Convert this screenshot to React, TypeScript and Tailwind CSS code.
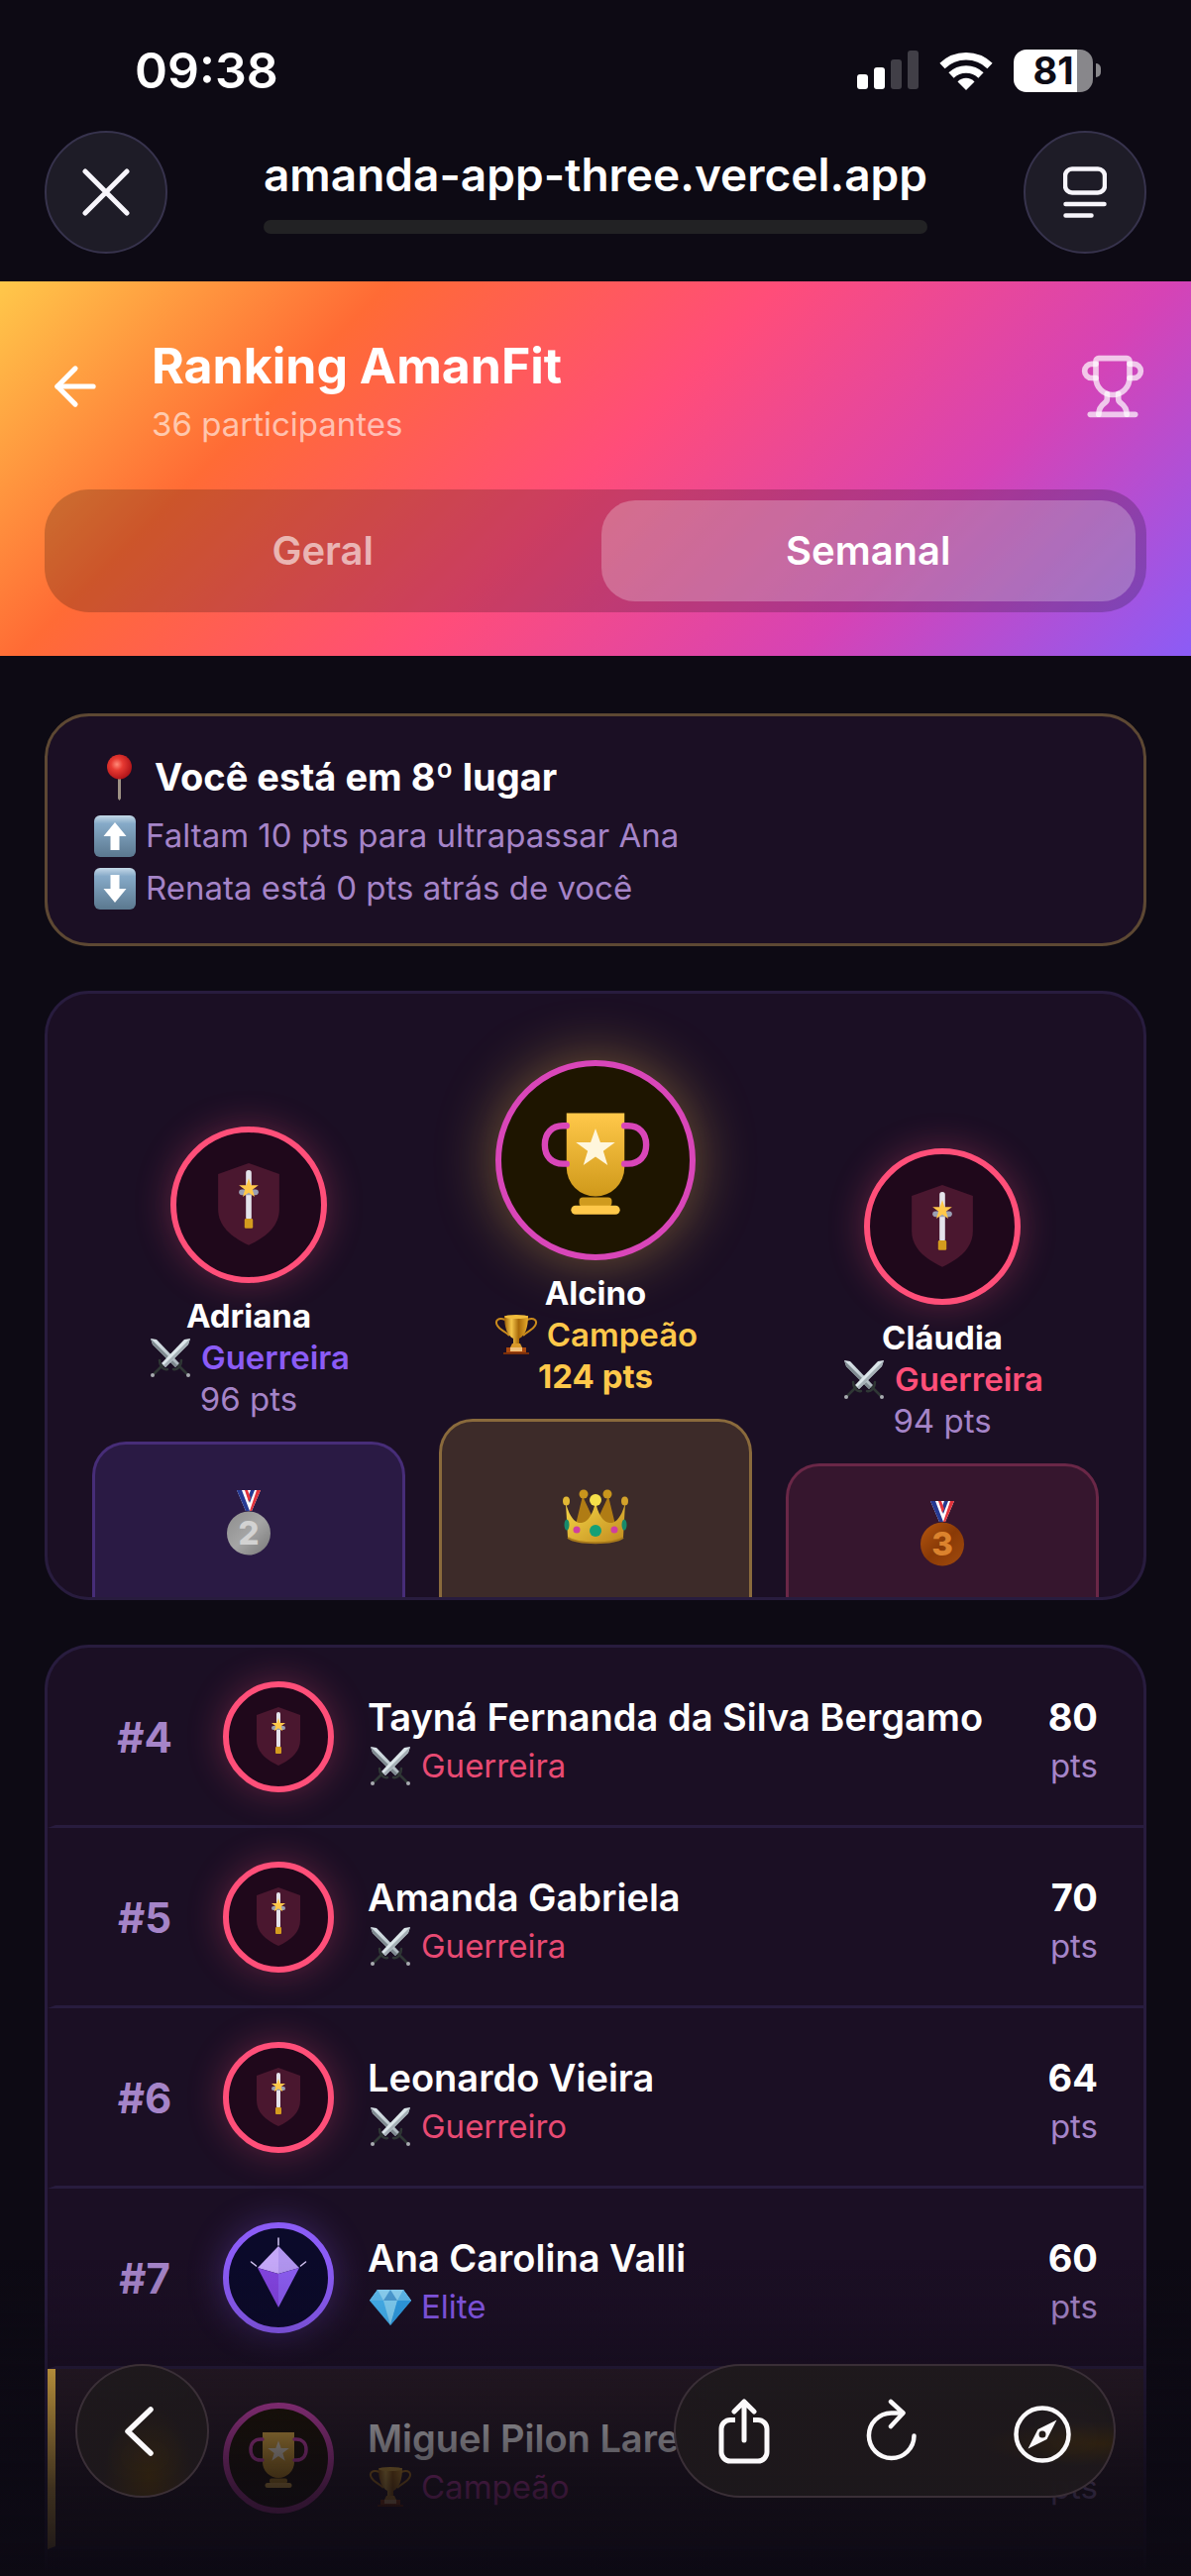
import * as React from "react"
import { ArrowLeft, Trophy } from "lucide-react"
import { clsx } from "clsx"

type Rank = "warrior" | "elite" | "champion"

interface RankingItem {
  position: number
  name: string
  rank: Rank
  title: string
  points: number
  current?: boolean
}

const ranking: RankingItem[] = [
  { position: 4, name: "Tayná Fernanda da Silva Bergamo", rank: "warrior", title: "Guerreira", points: 80 },
  { position: 5, name: "Amanda Gabriela", rank: "warrior", title: "Guerreira", points: 70 },
  { position: 6, name: "Leonardo Vieira", rank: "warrior", title: "Guerreiro", points: 64 },
  { position: 7, name: "Ana Carolina Valli", rank: "elite", title: "Elite", points: 60 },
  { position: 8, name: "Miguel Pilon Lare", rank: "champion", title: "Campeão", points: 50, current: true },
]

const rankText: Record<Rank, string> = {
  warrior: "text-[#e84a73]",
  elite: "text-[#8558e8]",
  champion: "text-[#d946b9]",
}

/* ---------- emoji ---------- */

function SwordsEmoji() {
  return (
    <svg viewBox="0 0 46 40" className="h-10 w-[46px] shrink-0" aria-hidden="true">
      <defs>
        <linearGradient id="blade" x1="0" y1="0" x2="1" y2="1">
          <stop offset="0" stopColor="#dfe9ee" />
          <stop offset="1" stopColor="#a9b4ba" />
        </linearGradient>
      </defs>
      <g stroke="#2f3735" strokeLinecap="round">
        <path d="M31 28l9 9M15 28l-9 9" strokeWidth="2.5" />
        <path d="M26 32c4 1 8-3 8-9M20 32c-4 1-8-3-8-9" strokeWidth="2.5" fill="none" />
      </g>
      <path d="M3 1l6 1 23 24-4 4L5 7z" fill="url(#blade)" />
      <path d="M3 1l27 27-2 2L5 7z" fill="#7f8a90" />
      <path d="M43 1l-6 1-23 24 4 4L41 7z" fill="#dce6ea" />
      <path d="M43 1L16 28l2 2L41 7z" fill="#a5b0b6" />
      <circle cx="5" cy="38" r="2" fill="#a8abb0" />
      <circle cx="41" cy="38" r="2" fill="#a8abb0" />
    </svg>
  )
}

function TrophyEmoji() {
  return (
    <svg viewBox="0 0 46 40" className="h-10 w-[46px] shrink-0" aria-hidden="true">
      <defs>
        <linearGradient id="cup-emoji" x1="0" y1="0" x2="1" y2="0">
          <stop offset="0" stopColor="#9c5f08" />
          <stop offset=".3" stopColor="#f5c64a" />
          <stop offset=".6" stopColor="#a86a0a" />
          <stop offset="1" stopColor="#e8ac2c" />
        </linearGradient>
      </defs>
      <path
        d="M12 5C5 2 1 6 4 11c2 4 7 5 12 10M34 5c7-3 11 1 8 6-2 4-7 5-12 10"
        fill="none"
        stroke="#c98a1c"
        strokeWidth="2"
      />
      <path d="M11 1h24c0 12-3 20-9 23v6h-6v-6C14 21 11 13 11 1z" fill="url(#cup-emoji)" />
      <ellipse cx="23" cy="2" rx="12" ry="2" fill="#f0bb3c" />
      <path d="M19 29h8l2 4H17z" fill="#d9992a" />
      <path d="M13 33h20v5H13z" fill="#a8480f" />
      <path d="M17 33h12v4H17z" fill="#f1c07a" />
      <path d="M10 38h26v2H10z" fill="#7a2f0a" />
    </svg>
  )
}

function DiamondEmoji() {
  return (
    <svg viewBox="0 0 46 40" className="h-10 w-[46px] shrink-0" aria-hidden="true">
      <path d="M10 3h26l8 11-21 25L2 14z" fill="#45b4f2" />
      <path d="M10 3h26l8 11H2z" fill="#8ed6f8" />
      <path d="M10 3l6 11H2zM36 3l-6 11h14z" fill="#5fbdf0" />
      <path d="M16 14L23 3l7 11z" fill="#4d9fd8" />
      <path d="M16 14h14l-7 25z" fill="#82d3f9" />
      <path d="M30 14h14L23 39z" fill="#2f9fe6" />
    </svg>
  )
}

function PinEmoji() {
  return (
    <svg viewBox="0 0 54 50" className="h-[50px] w-[54px] shrink-0" aria-hidden="true">
      <defs>
        <radialGradient id="pin" cx=".4" cy=".4" r=".6">
          <stop offset="0" stopColor="#ff8a78" />
          <stop offset=".4" stopColor="#e83a32" />
          <stop offset="1" stopColor="#b3161a" />
        </radialGradient>
      </defs>
      <path d="M26 24h3v22l-1.500 2L26 46z" fill="#9d9184" />
      <circle cx="27.500" cy="14" r="12.500" fill="url(#pin)" />
    </svg>
  )
}

function ArrowEmoji({ down }: { down?: boolean }) {
  return (
    <svg viewBox="0 0 46 46" className="h-[46px] w-[46px] shrink-0" aria-hidden="true">
      <defs>
        <linearGradient id="key" x1="0" y1="0" x2="0" y2="1">
          <stop offset="0" stopColor="#c5d9e8" />
          <stop offset=".2" stopColor="#86aac8" />
          <stop offset="1" stopColor="#5b788f" />
        </linearGradient>
      </defs>
      <rect x="2" y="2" width="42" height="42" rx="6" fill="url(#key)" />
      <path
        d={down ? "M18.500 9h9v14h7L23 37 11.500 23h7z" : "M18.500 37h9V23h7L23 9 11.500 23h7z"}
        fill="#fff"
      />
    </svg>
  )
}

function MedalEmoji({ place }: { place: 2 | 3 }) {
  const silver = place === 2
  return (
    <svg viewBox="0 0 44 66" className="h-[66px] w-11" aria-label={`${place}º lugar`} role="img">
      <defs>
        <linearGradient id={`medal-${place}`} x1="0" y1="0" x2="1" y2="1">
          <stop offset="0" stopColor={silver ? "#8d8d8d" : "#b5560f"} />
          <stop offset=".5" stopColor={silver ? "#a5a5a5" : "#8a3a06"} />
          <stop offset="1" stopColor={silver ? "#777" : "#a14b0d"} />
        </linearGradient>
      </defs>
      <path d="M10 0h24l-9 21h-6z" fill="#fff" />
      <path d="M10 0h5l8 21h-4zM24 0h4l-5 13-2-5z" fill="#263a93" />
      <path d="M18 0h3l3 8-2 4zM30 0h4l-9 21h-2z" fill="#e2333c" />
      <circle cx="22" cy="43.500" r="22" fill={`url(#medal-${place})`} />
      <text
        x="22"
        y="55"
        textAnchor="middle"
        fill={silver ? "#d2d2d2" : "#dc832d"}
        className="font-['Inter'] text-[33px] font-extrabold"
      >
        {place}
      </text>
    </svg>
  )
}

function CrownEmoji() {
  return (
    <svg viewBox="0 0 66 66" className="h-[66px] w-[66px]" aria-label="1º lugar" role="img">
      <defs>
        <linearGradient id="crown" x1="0" y1="0" x2="1" y2="1">
          <stop offset="0" stopColor="#f8d948" />
          <stop offset="1" stopColor="#c08a1e" />
        </linearGradient>
      </defs>
      <path d="M12 46l8-33 13 28 13-28 8 33z" fill="#b07c14" />
      <circle cx="21" cy="11" r="4.500" fill="#c9951c" />
      <circle cx="45" cy="11" r="4.500" fill="#c9951c" />
      <path d="M3 20c4 15 10 21 16 20 7-1 12-10 14-22 2 12 7 21 14 22 6 1 12-5 16-20l-2 35c-10 7-46 7-56 0z" fill="url(#crown)" />
      <circle cx="33" cy="17" r="6" fill="#f6e04a" />
      <ellipse cx="3.500" cy="18" rx="3.500" ry="4.500" fill="#e2b834" />
      <ellipse cx="62.500" cy="18" rx="3.500" ry="4.500" fill="#d3a22a" />
      <path d="M5 55c10 7 46 7 56 0" fill="none" stroke="#a87a1c" strokeWidth="2" />
      <circle cx="33" cy="48" r="6" fill="#14a076" />
      <circle cx="14" cy="47" r="3.500" fill="#cf3fa0" />
      <circle cx="52" cy="47" r="3.500" fill="#cf3fa0" />
      <ellipse cx="4" cy="42" rx="2.500" ry="5.500" fill="#178a6a" />
      <ellipse cx="62" cy="42" rx="2.500" ry="5.500" fill="#178a6a" />
    </svg>
  )
}

function RankEmoji({ rank }: { rank: Rank }) {
  if (rank === "elite") return <DiamondEmoji />
  if (rank === "champion") return <TrophyEmoji />
  return <SwordsEmoji />
}

/* ---------- avatars ---------- */

function WarriorArt() {
  return (
    <>
      <path d="M56 26l22 8v25c0 12-9 20-22 26-13-6-22-14-22-26V34z" fill="#4a172f" />
      <rect x="54" y="31" width="4" height="36" rx="2" fill="#e4e3ea" />
      <rect x="49" y="45" width="14" height="4" rx="2" fill="#9aa0b4" />
      <rect x="53" y="66" width="6" height="7" rx="1" fill="#d49c1e" />
      <path d="M56 37l1.700 5h5.300l-4.300 3.200 1.600 5.100L56 47.200l-4.300 3.100 1.600-5.100L49 42h5.300z" fill="#ffc84a" />
    </>
  )
}

function EliteArt() {
  return (
    <>
      <path d="M56 24L35 46l21 6z" fill="#c5a8f8" />
      <path d="M56 24l21 22-21 6z" fill="#b195ef" />
      <path d="M35 46l21 6v34z" fill="#8344e0" />
      <path d="M77 46l-21 6v34z" fill="#8b5cf0" />
      <path d="M56 16v7M28.500 40l5 4M83.500 40l-5 4" stroke="#d5c6f5" strokeWidth="1.500" strokeLinecap="round" />
    </>
  )
}

function ChampionArt() {
  return (
    <>
      <defs>
        <linearGradient id="cup" x1="0" y1="0" x2="0" y2="1">
          <stop offset="0" stopColor="#ffc84a" />
          <stop offset="1" stopColor="#cf991a" />
        </linearGradient>
      </defs>
      <path d="M40 30h32v30a16 16 0 0 1-32 0z" fill="url(#cup)" />
      <path
        d="M40 37h-2c-6 0-10 4-10 10.500S32 58 38 58h2M72 37h2c6 0 10 4 10 10.500S80 58 74 58h-2"
        fill="none"
        stroke="#d946b9"
        strokeWidth="3.500"
        strokeLinecap="round"
      />
      <rect x="47" y="76.500" width="18" height="5" rx="2" fill="#d09b1e" />
      <rect x="42.500" y="81" width="27" height="5" rx="2.500" fill="#ffc84a" />
      <path d="M56 38.500l2.700 7.600h8.100l-6.500 4.900 2.400 7.800L56 54.100l-6.700 4.700 2.400-7.800-6.500-4.900h8.100z" fill="#fff6dc" />
    </>
  )
}

const avatarStyle: Record<Rank, string> = {
  warrior: "border-[#ff4f79] bg-[#1f081b] shadow-[0_0_36px_rgba(255,79,121,0.3)]",
  elite: "border-[#8b5cf6] bg-[#0b0a2a] shadow-[0_0_36px_rgba(139,92,246,0.3)]",
  champion: "border-[#d946b9] bg-[#1e1500]",
}

function Avatar({ rank, large, className }: { rank: Rank; large?: boolean; className?: string }) {
  return (
    <div className={clsx("shrink-0 rounded-full border-[6px]", avatarStyle[rank], className)}>
      <svg viewBox={large ? "4 4 104 104" : "6 6 100 100"} className="h-full w-full" aria-hidden="true">
        {rank === "warrior" && <WarriorArt />}
        {rank === "elite" && <EliteArt />}
        {rank === "champion" && <ChampionArt />}
      </svg>
    </div>
  )
}

/* ---------- browser chrome ---------- */

function StatusBar() {
  return (
    <div className="flex items-center justify-between pt-[43px] pr-[91px] pb-[33px] pl-[136px] leading-[56px]">
      <time className="text-[50px] font-semibold">09:38</time>
      <div className="flex items-center gap-[21px]">
        <svg viewBox="0 0 62 40" className="h-10 w-[62px]" role="img" aria-label="Sinal">
          <rect x="0" y="24" width="11" height="15" rx="3" fill="#fff" />
          <rect x="17" y="17" width="11" height="22" rx="3" fill="#fff" />
          <rect x="34" y="9" width="11" height="30" rx="3" fill="#413f47" />
          <rect x="51" y="0" width="11" height="39" rx="3" fill="#413f47" />
        </svg>
        <svg viewBox="0 0 54 39" className="h-[39px] w-[54px]" role="img" aria-label="Wi-Fi">
          <g fill="none" stroke="#fff" strokeWidth="7.500">
            <path d="M3 14.500a34.500 34.500 0 0 1 48 0" />
            <path d="M12 24a21.500 21.500 0 0 1 30 0" />
          </g>
          <path d="M27 39l-8.500-8.600a12 12 0 0 1 17 0z" fill="#fff" />
        </svg>
        <div className="flex items-center gap-[3px]">
          <div className="flex h-[43px] w-20 items-center justify-center rounded-[13px] bg-linear-to-r from-white from-80% to-[#88878b] to-80%">
            <span className="text-[38px] leading-none font-bold text-[#0d0b15]">81</span>
          </div>
          <div className="h-[14px] w-[5px] rounded-r-full bg-[#88878b]" />
        </div>
      </div>
    </div>
  )
}

const roundButton =
  "grid size-[124px] place-items-center rounded-full border-2 border-[#37334d] bg-[#1e1c27]"

function AddressBar() {
  return (
    <div className="flex items-center justify-between px-[45px] pb-7">
      <button type="button" aria-label="Fechar" className={roundButton}>
        <svg viewBox="0 0 48 48" className="size-12">
          <path d="M3 3l42 42M45 3L3 45" stroke="#f7f5fb" strokeWidth="5" strokeLinecap="round" />
        </svg>
      </button>
      <div className="pb-1.5">
        <p className="text-[46px] leading-[60px] font-semibold">amanda-app-three.vercel.app</p>
        <div className="mt-4 h-3.5 rounded-full bg-[#222224]" />
      </div>
      <button type="button" aria-label="Modo leitor" className={roundButton}>
        <svg viewBox="0 0 44 52" className="h-[52px] w-11" stroke="#f7f5fb" fill="none" strokeLinecap="round">
          <rect x="2" y="2.500" width="40" height="24" rx="7" strokeWidth="4.500" />
          <path d="M2.500 38h39M2.500 49.500h26" strokeWidth="4.500" />
        </svg>
      </button>
    </div>
  )
}

function BrowserControls() {
  const glass = "flex items-center rounded-full border-2 border-[#42363f]/80 backdrop-blur-md"
  return (
    <>
      <div className="pointer-events-none fixed inset-x-0 bottom-0 h-[400px] bg-[linear-gradient(to_bottom,rgba(13,10,20,0)_20%,rgba(13,10,20,0.1)_34%,rgba(13,10,20,0.32)_48%,rgba(13,10,20,0.62)_66%,rgba(13,10,20,0.8)_78%,rgba(13,10,20,0.93)_95%,#0d0a14)]" />
      <div className="fixed inset-x-0 bottom-[79px] flex justify-between px-[76px]">
        <button
          type="button"
          aria-label="Voltar"
          className={clsx(
            glass,
            "size-[135px] justify-center bg-[radial-gradient(ellipse_at_55%_85%,rgba(46,33,16,0.9),rgba(30,25,28,0.9)_45%)]"
          )}
        >
          <svg viewBox="0 0 38 50" className="h-[50px] w-[38px]">
            <path d="M27 3L4 25l23 22" fill="none" stroke="#fbf9fb" strokeWidth="5.500" strokeLinecap="round" strokeLinejoin="round" />
          </svg>
        </button>
        <div
          className={clsx(
            glass,
            "h-[135px] gap-[95px] bg-[radial-gradient(ellipse_at_97%_60%,rgba(46,33,16,0.9),rgba(30,25,28,0.9)_20%)] px-[42px]"
          )}
        >
          <button type="button" aria-label="Compartilhar">
            <svg viewBox="0 0 54 66" className="h-[66px] w-[54px]" fill="none" stroke="#fbf9fb" strokeWidth="5" strokeLinecap="round" strokeLinejoin="round">
              <path d="M18 21.500h-5a9 9 0 0 0-9 9V54a9 9 0 0 0 9 9h28a9 9 0 0 0 9-9V30.500a9 9 0 0 0-9-9h-5" strokeLinecap="butt" />
              <path d="M27 42V3M17 13L27 3l10 10" />
            </svg>
          </button>
          <button type="button" aria-label="Recarregar">
            <svg viewBox="0 0 54 66" className="h-[66px] w-[54px]" fill="none" stroke="#fbf9fb" strokeWidth="4.500" strokeLinecap="round" strokeLinejoin="round">
              <path d="M49.500 37.500A22.800 22.800 0 1 1 26.500 14.500h11.500" />
              <path d="M26 3l12.500 11.500L26 28" />
            </svg>
          </button>
          <button type="button" aria-label="Abrir no Safari">
            <svg viewBox="0 0 60 66" className="h-[66px] w-[60px]">
              <circle cx="30" cy="36" r="26.500" fill="none" stroke="#fbf9fb" strokeWidth="4.500" />
              <path
                d="M44.500 21.500L34.500 41 15.500 50.500 25.500 31zM30 32.500a3.500 3.500 0 1 0 0 7 3.500 3.500 0 0 0 0-7z"
                fill="#fbf9fb"
                fillRule="evenodd"
              />
            </svg>
          </button>
        </div>
      </div>
    </>
  )
}

/* ---------- page ---------- */

function RankingHeader() {
  const tab = "flex-1 rounded-[34px] text-[40px] leading-[102px] font-semibold"
  return (
    <header className="bg-[linear-gradient(135deg,#ffc84a_0%,#ff6b35_25%,#ff4d79_50%,#d643b5_75%,#8b5cf6_100%)] px-[45px] pt-[47px] pb-11">
      <div className="flex items-center">
        <a href="#voltar" aria-label="Voltar" className="mr-[46px]">
          <ArrowLeft className="size-[62px]" />
        </a>
        <div className="flex-1">
          <h1 className="text-[50px] leading-[76px] font-bold">Ranking AmanFit</h1>
          <p className="text-[33px] leading-[42px] text-white/60">36 participantes</p>
        </div>
        <Trophy className="size-[68px] text-white/70" />
      </div>
      <div role="tablist" className="mt-[45px] flex gap-[11px] rounded-[45px] bg-black/20 p-[11px]">
        <button type="button" role="tab" aria-selected="false" className={clsx(tab, "text-white/60")}>
          Geral
        </button>
        <button type="button" role="tab" aria-selected="true" className={clsx(tab, "bg-white/25")}>
          Semanal
        </button>
      </div>
    </header>
  )
}

function PositionCard() {
  return (
    <section className="rounded-[45px] border-[3px] border-[#5d4833] bg-[#1b0f24] px-[45px] py-[29px]">
      <h2 className="flex items-center gap-[9px] text-[38px] leading-[65px] font-bold">
        <PinEmoji />
        Você está em 8º lugar
      </h2>
      <p className="flex items-center gap-2 text-[33px] leading-[53px] text-[#a584c8]">
        <ArrowEmoji />
        Faltam 10 pts para ultrapassar Ana
      </p>
      <p className="flex items-center gap-2 text-[33px] leading-[53px] text-[#a584c8]">
        <ArrowEmoji down />
        Renata está 0 pts atrás de você
      </p>
    </section>
  )
}

interface PodiumColumnProps {
  name: string
  title: string
  points: number
  rank: Rank
  avatarClass: string
  titleClass: string
  pointsClass: string
  stepClass: string
  children: React.ReactNode
}

function PodiumColumn(props: PodiumColumnProps) {
  return (
    <div className="flex min-w-0 flex-1 flex-col items-center text-[33px] leading-[42px]">
      <Avatar rank={props.rank} large className={props.avatarClass} />
      <p className="mt-3 font-bold">{props.name}</p>
      <p className={clsx("flex h-[42px] items-center gap-2 font-semibold", props.titleClass)}>
        <RankEmoji rank={props.rank} />
        {props.title}
      </p>
      <p className={props.pointsClass}>{props.points} pts</p>
      <div
        className={clsx(
          "mt-[22px] flex w-full items-center justify-center rounded-t-[34px] border-[3px] border-b-0",
          props.stepClass
        )}
      >
        {props.children}
      </div>
    </div>
  )
}

function Podium() {
  return (
    <section className="flex items-end gap-[34px] rounded-[45px] border-[3px] border-[#281c3e] bg-[#1b0f24] px-[45px] pt-[67px]">
      <PodiumColumn
        name="Adriana"
        title="Guerreira"
        points={96}
        rank="warrior"
        avatarClass="size-[158px]"
        titleClass="text-[#8b5cf6]"
        pointsClass="text-[#a584c8]"
        stepClass="h-[157px] border-[#472d78] bg-[#2a1a44] pt-1"
      >
        <MedalEmoji place={2} />
      </PodiumColumn>
      <PodiumColumn
        name="Alcino"
        title="Campeão"
        points={124}
        rank="champion"
        avatarClass="size-[202px] shadow-[0_0_60px_rgba(255,200,74,0.4)]"
        titleClass="text-[#ffc84a]"
        pointsClass="font-bold text-[#ffc84a]"
        stepClass="h-[180px] border-[#8a6a3c] bg-[#3d2b29] pt-3"
      >
        <CrownEmoji />
      </PodiumColumn>
      <PodiumColumn
        name="Cláudia"
        title="Guerreira"
        points={94}
        rank="warrior"
        avatarClass="size-[158px]"
        titleClass="text-[#ff4f79]"
        pointsClass="text-[#a584c8]"
        stepClass="h-[135px] border-[#6a2747] bg-[#36162e] pt-1"
      >
        <MedalEmoji place={3} />
      </PodiumColumn>
    </section>
  )
}

function RankingRow({ item }: { item: RankingItem }) {
  return (
    <li
      className={clsx(
        "flex items-center gap-[34px] border-b-[3px] border-l-8 border-b-[#281c3e] pt-[34px] pr-[46px] pb-[33px] pl-[45px]",
        item.current ? "border-l-[#ffc84a] bg-[#2a1c26]" : "border-l-transparent"
      )}
    >
      <span
        className={clsx(
          "w-[90px] shrink-0 text-center text-[42px] font-bold",
          item.current ? "text-[#ffc84a]" : "text-[#a584c8]"
        )}
      >
        #{item.position}
      </span>
      <Avatar rank={item.rank} className="size-28" />
      <div className="min-w-0 flex-1">
        <p className="text-[38px] leading-[58px] font-semibold">{item.name}</p>
        <p className={clsx("flex items-center gap-2 text-[33px] leading-10", rankText[item.rank])}>
          <RankEmoji rank={item.rank} />
          {item.title}
        </p>
      </div>
      <div className="shrink-0 text-right">
        <p className={clsx("text-[38px] leading-[58px] font-bold", item.current && "text-[#ffc84a]")}>{item.points}</p>
        <p className="text-[33px] leading-10 text-[#a584c8]">pts</p>
      </div>
    </li>
  )
}

export default function App() {
  return (
    <div className="flex min-h-screen flex-col bg-[#0d0a14] font-['Inter',sans-serif] text-white">
      <StatusBar />
      <AddressBar />
      <RankingHeader />
      <main className="flex flex-1 flex-col gap-[45px] px-[45px] pt-[58px]">
        <PositionCard />
        <Podium />
        <ol className="flex-1 overflow-hidden rounded-t-[45px] border-[3px] border-b-0 border-[#281c3e] bg-[#1b0f24]">
          {ranking.map((item) => (
            <RankingRow key={item.position} item={item} />
          ))}
        </ol>
      </main>
      <BrowserControls />
    </div>
  )
}
